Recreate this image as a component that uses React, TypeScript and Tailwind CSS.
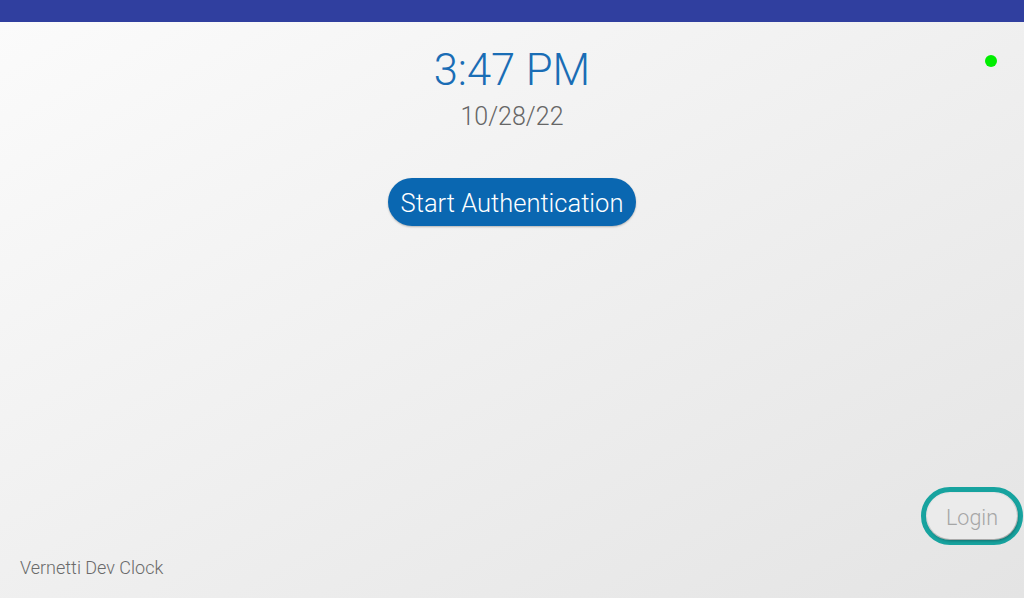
import React from "react";

export default function App() {
  return (
    <div
      className="flex h-[598px] w-full flex-col overflow-hidden"
      style={{ fontFamily: "Roboto, 'Noto Sans', sans-serif" }}
    >
      <div className="h-[22px] w-full shrink-0 bg-[#303f9f]" />
      <div className="relative flex flex-1 flex-col bg-linear-to-br from-[#fbfbfb] to-[#e4e4e4]">
        <div className="absolute right-[27px] top-[33px] h-[12px] w-[12px] rounded-full bg-[#00ee00]" />
        <div className="flex flex-col items-center">
          <div className="mt-[27px] text-[43.5px] font-light leading-[44px] text-[#1a6db5]">
            3:47 PM
          </div>
          <div className="mt-[11px] text-[25px] font-light leading-[25px] text-[#666666]">
            10/28/22
          </div>
          <button className="mt-[49px] flex h-[48px] w-[248px] items-center justify-center rounded-full bg-[#0a67b1] pt-[2px] text-[25.5px] font-light text-white shadow-[0_1px_2px_rgba(0,0,0,0.25)]">
            Start Authentication
          </button>
        </div>
        <div className="flex-1" />
        <div className="flex items-end justify-between pl-[20px] pr-[1px]">
          <div className="pb-[21px] text-[18px] font-light leading-[18px] text-[#6a6a6a]">
            Vernetti Dev Clock
          </div>
          <div className="mb-[53px] flex h-[58px] w-[102px] items-center justify-center rounded-full border-[5px] border-[#17a39f] p-[1px]">
            <button className="flex h-full w-full items-center justify-center rounded-full bg-[#ebebeb] pt-[5px] text-[21.5px] font-light text-[#a6a6a6] shadow-[1px_2px_3px_rgba(0,0,0,0.3)]">
              Login
            </button>
          </div>
        </div>
      </div>
    </div>
  );
}
